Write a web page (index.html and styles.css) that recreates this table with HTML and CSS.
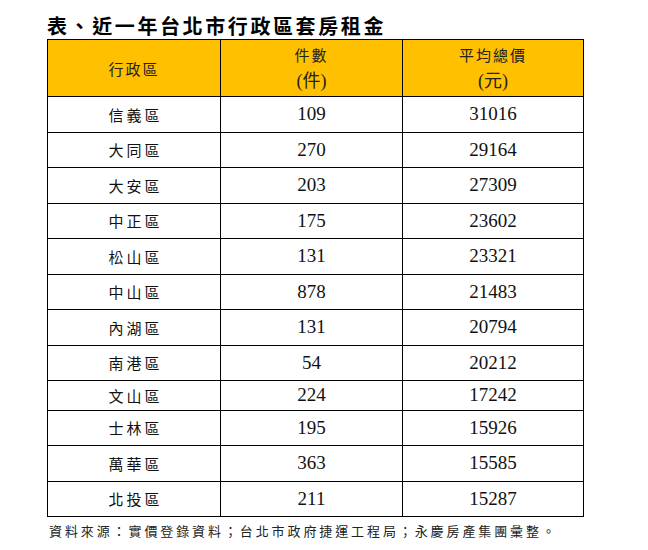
FILE: index.html
```html
<!DOCTYPE html>
<html lang="zh-Hant">
<head>
<meta charset="utf-8">
<link rel="stylesheet" href="styles.css">
</head>
<body>
<div class="page">
  <h1 class="title">表、近一年台北市行政區套房租金</h1>
  <table class="rent">
    <thead>
      <tr>
        <th class="c1">行政區</th>
        <th class="c2"><div class="hl">件數</div><div class="hl num">(件)</div></th>
        <th class="c3"><div class="hl">平均總價</div><div class="hl num">(元)</div></th>
      </tr>
    </thead>
    <tbody>
      <tr><td class="zh">信義區</td><td>109</td><td>31016</td></tr>
      <tr><td class="zh">大同區</td><td>270</td><td>29164</td></tr>
      <tr><td class="zh">大安區</td><td>203</td><td>27309</td></tr>
      <tr><td class="zh">中正區</td><td>175</td><td>23602</td></tr>
      <tr><td class="zh">松山區</td><td>131</td><td>23321</td></tr>
      <tr><td class="zh">中山區</td><td>878</td><td>21483</td></tr>
      <tr><td class="zh">內湖區</td><td>131</td><td>20794</td></tr>
      <tr><td class="zh">南港區</td><td>54</td><td>20212</td></tr>
      <tr class="short"><td class="zh">文山區</td><td>224</td><td>17242</td></tr>
      <tr><td class="zh">士林區</td><td>195</td><td>15926</td></tr>
      <tr><td class="zh">萬華區</td><td>363</td><td>15585</td></tr>
      <tr><td class="zh">北投區</td><td>211</td><td>15287</td></tr>
    </tbody>
  </table>
  <p class="source">資料來源：實價登錄資料；台北市政府捷運工程局；永慶房產集團彙整。</p>
</div>
</body>
</html>
```
FILE: styles.css
```css
html, body {
  margin: 0;
  padding: 0;
  background: #ffffff;
}
.page {
  padding: 13px 0 0 47px;
  font-family: "Liberation Serif", "Noto Sans CJK TC", serif;
  color: #111;
}
.title {
  margin: 0;
  height: 26px;
  font-family: "Noto Sans CJK TC", sans-serif;
  font-weight: 700;
  font-size: 20px;
  line-height: 26px;
  letter-spacing: 2.6px;
  color: #000;
}
.rent {
  border-collapse: collapse;
  width: 536px;
  table-layout: fixed;
}
.rent th, .rent td {
  border: 1px solid #000;
  text-align: center;
  padding: 0;
}
.rent th {
  background: #ffc000;
  height: 56px;
  font-weight: normal;
  font-family: "Noto Sans CJK TC", sans-serif;
  font-size: 15px;
  letter-spacing: 2px;
  color: #222;
}
.c1 { width: 172px; }
.c2 { width: 181px; }
.c3 { width: 180px; }
.hl {
  line-height: 27px;
}
.hl.num {
  font-family: "Liberation Serif", "Noto Sans CJK TC", serif;
  font-size: 18px;
  letter-spacing: 0;
}
.rent td {
  height: 34.5px;
  font-size: 19px;
  color: #111;
}
.rent tr.short td {
  height: 28.5px;
}
.rent td.zh {
  font-family: "Noto Sans CJK TC", sans-serif;
  font-size: 15px;
  letter-spacing: 3px;
  padding-left: 3px;
}
.source {
  margin: 4px 0 0 2px;
  font-family: "Noto Sans CJK TC", sans-serif;
  font-size: 13px;
  letter-spacing: 2.9px;
  color: #222;
}
```
